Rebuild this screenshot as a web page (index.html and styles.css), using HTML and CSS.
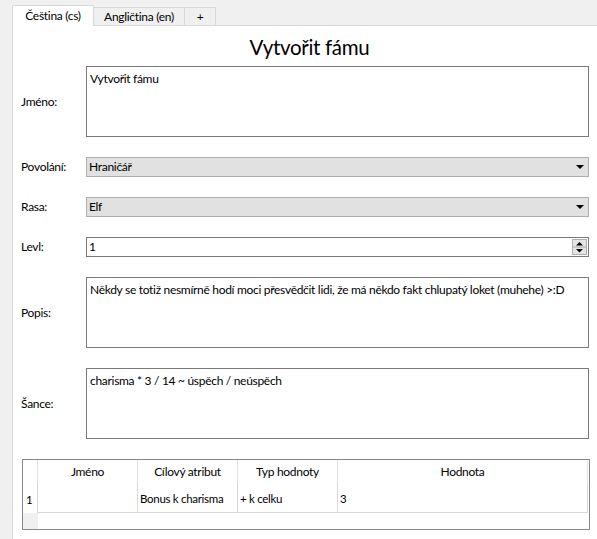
FILE: index.html
```html
<!DOCTYPE html>
<html lang="cs">
<head>
<meta charset="utf-8">
<title>Vytvořit fámu</title>
<link rel="stylesheet" href="styles.css">
</head>
<body>
<div class="tabs">
  <div class="tab active">Čeština (cs)</div>
  <div class="tab tab-en">Angličtina (en)</div>
  <div class="tab tab-plus">+</div>
</div>
<div class="pane">
  <h1 class="title">Vytvořit fámu</h1>
  <div class="form">
    <div class="label">Jméno:</div>
    <div class="area">Vytvořit fámu</div>

    <div class="label">Povolání:</div>
    <div class="combo"><span>Hraničář</span><span class="arrow"></span></div>

    <div class="label">Rasa:</div>
    <div class="combo"><span>Elf</span><span class="arrow"></span></div>

    <div class="label">Levl:</div>
    <div class="spin"><span>1</span>
      <svg class="spin-btn" width="15" height="16" viewBox="0 0 15 16">
        <rect x="0.5" y="0.5" width="14" height="15" fill="#e5e5e5" stroke="#adadad"/>
        <line x1="1" y1="8" x2="14" y2="8" stroke="#adadad"/>
        <polygon points="4,6.5 11,6.5 7.5,3" fill="#000"/>
        <polygon points="4,10 11,10 7.5,13.5" fill="#000"/>
      </svg>
    </div>

    <div class="label">Popis:</div>
    <div class="area">Někdy se totiž nesmírně hodí moci přesvědčit lidi, že má někdo fakt chlupatý loket (muhehe) &gt;:D</div>

    <div class="label">Šance:</div>
    <div class="area">charisma * 3 / 14 ~ úspěch / neúspěch</div>

    <div class="grid-table">
      <div class="th vh"></div>
      <div class="th">Jméno</div>
      <div class="th">Cílový atribut</div>
      <div class="th">Typ hodnoty</div>
      <div class="th">Hodnota</div>

      <div class="td vh">1</div>
      <div class="td"></div>
      <div class="td">Bonus k charisma</div>
      <div class="td">+ k celku</div>
      <div class="td">3</div>

      <div class="vh-empty"></div>
      <div class="empty"></div>
    </div>
  </div>
</div>
</body>
</html>
```

FILE: styles.css
```css
html, body {
  margin: 0;
  padding: 0;
}
body {
  background: #f0f0f0;
  font-family: Lato, "Liberation Sans", sans-serif;
  font-size: 12px;
  letter-spacing: -0.3px;
  color: #000;
  width: 597px;
  height: 539px;
  overflow: hidden;
}
.tabs {
  display: flex;
  align-items: flex-end;
  padding: 5px 0 0 12px;
  height: 20px;
}
.tab {
  box-sizing: border-box;
  height: 18px;
  border: 1px solid #d9d9d9;
  border-bottom: none;
  border-left: none;
  background: #f0f0f0;
  display: flex;
  align-items: center;
  justify-content: center;
  line-height: 16px;
  padding-top: 1px;
}
.tab.active {
  position: relative;
  z-index: 1;
  height: 21px;
  margin-bottom: -1px;
  width: 82px;
  border-left: 1px solid #d9d9d9;
  background: #fff;
  padding-top: 0;
}
.tab-en { width: 91px; }
.tab-plus { width: 31px; }

.pane {
  margin-left: 12px;
  width: 585px;
  height: 514px;
  background: #fff;
  border-top: 1px solid #d9d9d9;
  border-left: 1px solid #d9d9d9;
}
.title {
  margin: 0;
  padding-top: 8px;
  height: 32px;
  text-align: center;
  font-weight: normal;
  font-size: 20.5px;
  line-height: 27px;
  padding-left: 8px;
}
.form {
  display: grid;
  grid-template-columns: 65px 503px;
  row-gap: 20px;
  padding-left: 8px;
  align-items: center;
}
.label {
  line-height: 16px;
}
.area {
  box-sizing: border-box;
  height: 71px;
  border: 1px solid #7a7a7a;
  padding: 4px 3px 3px;
  line-height: 16px;
  background: #fff;
}
.combo {
  box-sizing: border-box;
  height: 20px;
  border: 1px solid #adadad;
  background: #e1e1e1;
  display: flex;
  align-items: center;
  justify-content: space-between;
  padding: 0 4px 0 2px;
  line-height: 16px;
}
.arrow {
  width: 0;
  height: 0;
  border-left: 4px solid transparent;
  border-right: 4px solid transparent;
  border-top: 4px solid #000;
}
.spin {
  box-sizing: border-box;
  height: 20px;
  border: 1px solid #7a7a7a;
  display: flex;
  align-items: center;
  justify-content: space-between;
  padding: 0 1px 0 2px;
  line-height: 16px;
}
.spin-btn {
  display: block;
}
.grid-table {
  grid-column: 1 / 3;
  margin-left: 1px;
  width: 568px;
  box-sizing: border-box;
  height: 71px;
  border: 1px solid #848890;
  display: grid;
  grid-template-columns: 15px 100px 100px 100px 250px;
  grid-template-rows: 23px 30px 16px;
  align-self: start;
}
.th {
  box-sizing: border-box;
  border-right: 1px solid #e5e5e5;
  text-align: center;
  line-height: 23px;
}
.td {
  box-sizing: border-box;
  border-right: 1px solid #d8d8d8;
  border-bottom: 1px solid #d8d8d8;
  padding: 2px 2px 0;
  display: flex;
  align-items: center;
  font-size: 11.5px;
}
.td.vh {
  border-bottom: none;
  padding-left: 3px;
}
.vh-empty {
  background: #f0f0f0;
}
.empty {
  grid-column: 2 / 6;
}
```
